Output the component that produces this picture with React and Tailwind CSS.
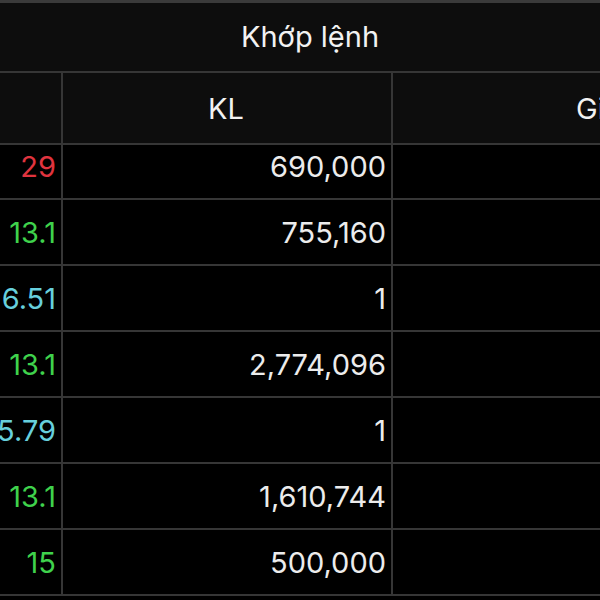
export default function App() {
  const rows = [
    { p: "29", c: "text-[#e0343f]", kl: "690,000", h: "h-[55px]", pad: "pb-[10px]" },
    { p: "13.1", c: "text-[#3fd24c]", kl: "755,160", h: "h-[66px]", pad: "" },
    { p: "6.51", c: "text-[#67d0dd]", kl: "1", h: "h-[66px]", pad: "" },
    { p: "13.1", c: "text-[#3fd24c]", kl: "2,774,096", h: "h-[66px]", pad: "" },
    { p: "5.79", c: "text-[#67d0dd]", kl: "1", h: "h-[66px]", pad: "" },
    { p: "13.1", c: "text-[#3fd24c]", kl: "1,610,744", h: "h-[66px]", pad: "" },
    { p: "15", c: "text-[#3fd24c]", kl: "500,000", h: "h-[66px]", pad: "" },
  ];
  return (
    <div
      className="w-[600px] h-[600px] overflow-hidden bg-black text-[29px] leading-none text-[#ececec]"
      style={{ fontFamily: "Inter, 'Noto Sans', sans-serif" }}
    >
      <div className="h-[3px] bg-[#3a3a3a]" />
      <div className="h-[70px] bg-[#0d0d0d] border-b-2 border-[#363636] flex items-center justify-center pl-[20px] pb-[2px] text-[#f2f2f2]">
        Khớp lệnh
      </div>
      <div className="h-[72px] bg-[#0d0d0d] border-b-2 border-[#363636] grid grid-cols-[63px_330px_1fr]">
        <div className="border-r-2 border-[#363636]" />
        <div className="border-r-2 border-[#363636] flex items-center justify-center pr-[2px] text-[#f2f2f2]">
          KL
        </div>
        <div className="flex items-center pl-[183px] text-[#f2f2f2]">Giá</div>
      </div>
      {rows.map((r, i) => (
        <div
          key={i}
          className={`${r.h} border-b-2 border-[#363636] grid grid-cols-[63px_330px_1fr]`}
        >
          <div className={`border-r-2 border-[#363636] flex items-center justify-end pr-[5px] ${r.pad} ${r.c}`}>
            {r.p}
          </div>
          <div className={`border-r-2 border-[#363636] flex items-center justify-end pr-[5px] ${r.pad}`}>
            {r.kl}
          </div>
          <div />
        </div>
      ))}
    </div>
  );
}
